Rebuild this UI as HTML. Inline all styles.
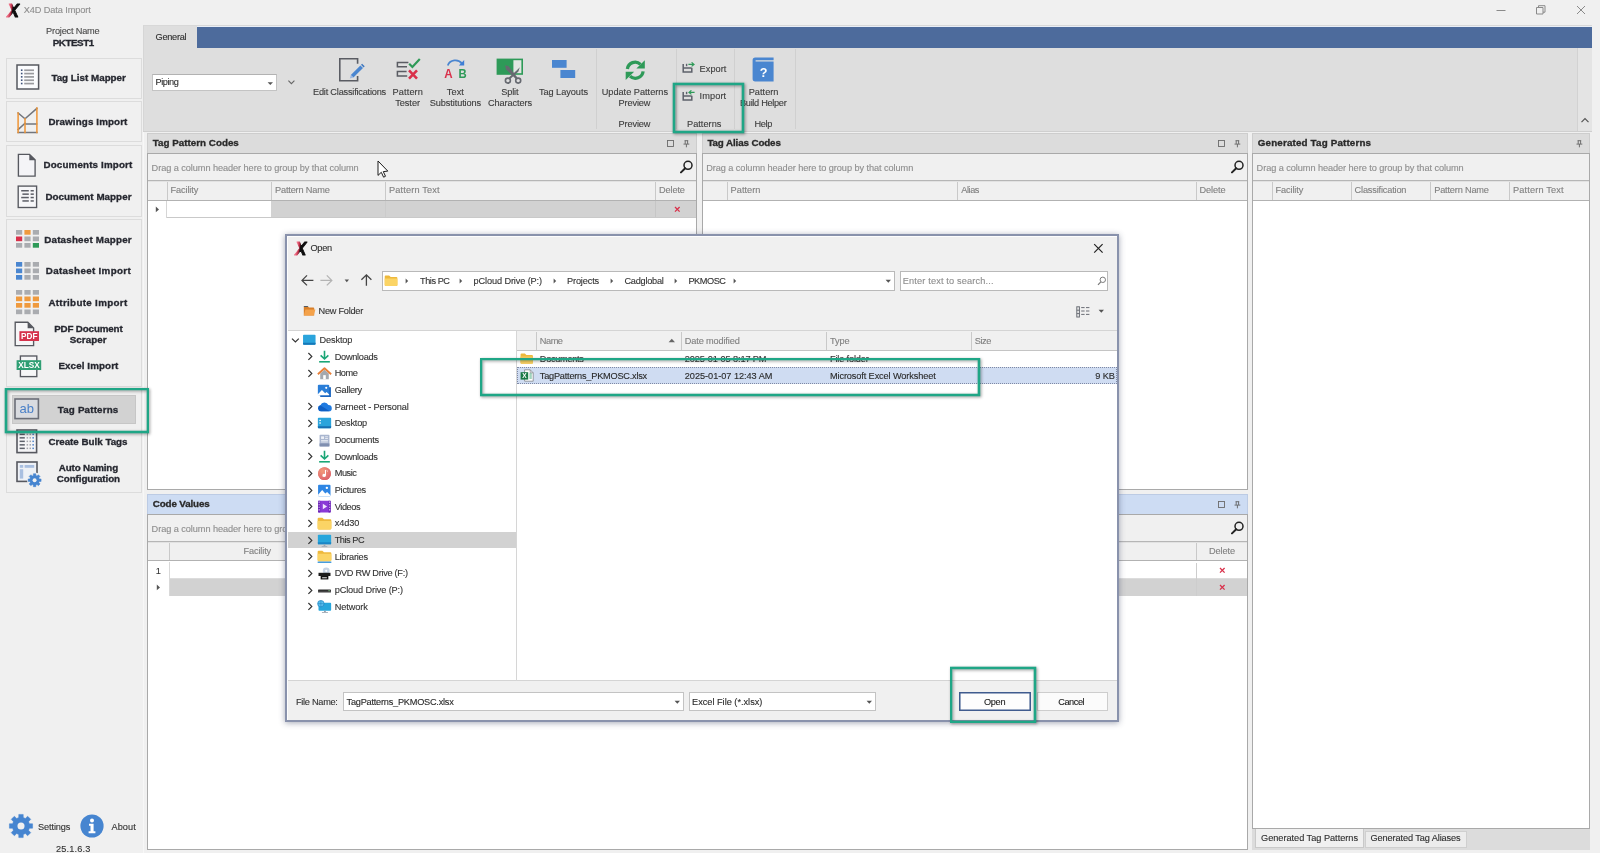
<!DOCTYPE html>
<html lang="en"><head><meta charset="utf-8"><title>X4D Data Import</title>
<style>
html,body{margin:0;padding:0;background:#f0f0f0;}
body{width:1600px;height:853px;overflow:hidden;position:relative;font-family:"Liberation Sans",Arial,sans-serif;font-size:9.2px;color:#3a3a3a;}
#app{position:absolute;left:0;top:0;width:1600px;height:853px;overflow:hidden;will-change:transform;}
#app div,#app svg,#app span.t{position:absolute;box-sizing:border-box;}
span.t{white-space:nowrap;line-height:12px;height:12px;-webkit-text-stroke:.12px;}
.hl{border:2px solid #1fa686;box-shadow:0 0 0 .3px #1fa686,inset 0 0 0 .3px #1fa686;filter:drop-shadow(1px 1.5px 1.5px rgba(0,0,0,.4));}
</style></head>
<body><div id="app">
<svg style="left:6px;top:1.5px" width="16.76" height="17" viewBox="0 0 16.76 17"><defs><linearGradient id="xg6" x1="0" y1="0" x2="1" y2="0" gradientTransform="skewX(-14)"><stop offset="0" stop-color="#e8506a"/><stop offset=".3" stop-color="#ee6f86"/><stop offset=".47" stop-color="#b82a44"/><stop offset=".58" stop-color="#0c0c0c"/><stop offset="1" stop-color="#0c0c0c"/></linearGradient></defs><text x="1.3" y="14.6" font-family="Liberation Sans,Arial,sans-serif" font-weight="700" font-style="italic" font-size="19.04" fill="url(#xg6)" stroke="url(#xg6)" stroke-width="0.9" stroke-linejoin="round" textLength="11.76" lengthAdjust="spacingAndGlyphs">X</text></svg><span class="t" style="left:23.80px;top:4px;color:#8e8e8e;letter-spacing:-0.108px;">X4D Data Import</span><svg style="left:1490px;top:0px" width="110" height="20" viewBox="0 0 110 20" ><g stroke="#8a8a8a" stroke-width="1" fill="none"><path d="M6.5 10.5h9"/><path d="M46.5 7.5h6.5v6.5h-6.5z"/><path d="M48.5 7.5v-1.8h6.5v6.5h-2"/><path d="M87 6l8 8M95 6l-8 8"/></g></svg><span class="t" style="left:46.10px;top:25px;color:#4a4a4a;letter-spacing:-0.188px;">Project Name</span><span class="t" style="left:52.72px;top:37px;font-size:9.8px;font-weight:700;-webkit-text-stroke:.32px;color:#262830;letter-spacing:-0.450px;">PKTEST1</span><div style="left:6px;top:57.5px;width:136px;height:41px;background:#f0f0f0;border:1px solid #dcdcdc;"></div><div style="left:6px;top:101px;width:136px;height:41px;background:#f0f0f0;border:1px solid #dcdcdc;"></div><div style="left:6px;top:144.5px;width:136px;height:72px;background:#f0f0f0;border:1px solid #dcdcdc;"></div><div style="left:6px;top:219px;width:136px;height:167.5px;background:#f0f0f0;border:1px solid #dcdcdc;"></div><div style="left:6px;top:388.5px;width:136px;height:104.5px;background:#f0f0f0;border:1px solid #dcdcdc;"></div><div style="left:12px;top:395px;width:124px;height:29px;background:#d2d2d2;border:1px solid #c6c6c6;"></div><div style="left:142.5px;top:132px;width:1.8px;height:721px;background:#f7f7f7;"></div><svg style="left:16px;top:64.4px" width="24" height="26" viewBox="0 0 24 26" ><rect x="1" y="1" width="21.6" height="24" fill="#fbfcfe" stroke="#56585f" stroke-width="1.5"/><rect x="4.9" y="5.40" width="1.6" height="1.6" fill="#3d5078"/><rect x="8.2" y="5.40" width="9.8" height="1.7" fill="#9a9b9f"/><rect x="4.9" y="8.73" width="1.6" height="1.6" fill="#3d5078"/><rect x="8.2" y="8.73" width="9.8" height="1.7" fill="#9a9b9f"/><rect x="4.9" y="12.06" width="1.6" height="1.6" fill="#3d5078"/><rect x="8.2" y="12.06" width="9.8" height="1.7" fill="#9a9b9f"/><rect x="4.9" y="15.39" width="1.6" height="1.6" fill="#3d5078"/><rect x="8.2" y="15.39" width="9.8" height="1.7" fill="#9a9b9f"/><rect x="4.9" y="18.72" width="1.6" height="1.6" fill="#3d5078"/><rect x="8.2" y="18.72" width="9.8" height="1.7" fill="#9a9b9f"/></svg><span class="t" style="left:51.40px;top:72px;font-size:9.8px;font-weight:700;-webkit-text-stroke:.32px;color:#262830;letter-spacing:0.007px;">Tag List Mapper</span><svg style="left:16px;top:106px" width="24" height="28" viewBox="0 0 24 28" ><g fill="none" stroke-width="1.5" stroke-linecap="square"><path d="M2.1 7l6.9 5.8L20.9 2.4M9 17.2l-6.9 6.4M9.6 18h11M2.1 26.4h18.8" stroke="#72757c"/><path d="M2.1 7v19.4M9 12.8v13.6M20.9 2v24.4" stroke="#ef9536"/></g></svg><span class="t" style="left:48.40px;top:116px;font-size:9.8px;font-weight:700;-webkit-text-stroke:.32px;color:#262830;letter-spacing:0.120px;">Drawings Import</span><svg style="left:17px;top:152.5px" width="20" height="25" viewBox="0 0 20 25" ><path d="M1.4 1.3h11.1l5.6 5.6v16.2H1.4z" fill="#f4f4f7" stroke="#56585f" stroke-width="1.35"/><path d="M12.3 1.2v6h6z" fill="#56585f"/></svg><span class="t" style="left:43.40px;top:159px;font-size:9.8px;font-weight:700;-webkit-text-stroke:.32px;color:#262830;letter-spacing:0.160px;">Documents Import</span><svg style="left:17px;top:184.5px" width="22" height="24" viewBox="0 0 22 24" ><rect x="1.2" y="1.1" width="18.4" height="21.4" fill="#f6f6f8" stroke="#56585f" stroke-width="1.35"/><rect x="4.2" y="5" width="7.6" height="1.5" fill="#5c5e66"/><rect x="13.6" y="5" width="3.2" height="1.5" fill="#5c5e66"/><rect x="5.4" y="8.4" width="6.4" height="1.5" fill="#5c5e66"/><rect x="13.6" y="8.4" width="3.2" height="1.5" fill="#5c5e66"/><rect x="4.2" y="11.8" width="7.6" height="1.5" fill="#5c5e66"/><rect x="13.6" y="11.8" width="3.2" height="1.5" fill="#5c5e66"/><rect x="5.4" y="15.2" width="6.4" height="1.5" fill="#5c5e66"/><rect x="13.6" y="15.2" width="3.2" height="1.5" fill="#5c5e66"/></svg><span class="t" style="left:45.40px;top:191px;font-size:9.8px;font-weight:700;-webkit-text-stroke:.32px;color:#262830;letter-spacing:0.042px;">Document Mapper</span><svg style="left:16px;top:230px" width="24" height="19.5" viewBox="0 0 24 19.5" ><rect x="0" y="0" width="6.2" height="4.7" fill="#aaacb0"/><rect x="8.4" y="0" width="6.2" height="4.7" fill="#ef9a3e"/><rect x="16.8" y="0" width="6.2" height="4.7" fill="#aaacb0"/><rect x="0" y="6.5" width="6.2" height="4.7" fill="#d9304a"/><rect x="8.4" y="6.5" width="6.2" height="4.7" fill="#aaacb0"/><rect x="16.8" y="6.5" width="6.2" height="4.7" fill="#aaacb0"/><rect x="0" y="13" width="6.2" height="4.7" fill="#aaacb0"/><rect x="8.4" y="13" width="6.2" height="4.7" fill="#aaacb0"/><rect x="16.8" y="13" width="6.2" height="4.7" fill="#2e9a58"/></svg><span class="t" style="left:44.20px;top:234px;font-size:9.8px;font-weight:700;-webkit-text-stroke:.32px;color:#262830;letter-spacing:0.207px;">Datasheet Mapper</span><svg style="left:16px;top:261.6px" width="24" height="19.5" viewBox="0 0 24 19.5" ><rect x="0" y="0" width="6.2" height="4.7" fill="#4a86d0"/><rect x="8.4" y="0" width="6.2" height="4.7" fill="#aaacb0"/><rect x="16.8" y="0" width="6.2" height="4.7" fill="#aaacb0"/><rect x="0" y="6.5" width="6.2" height="4.7" fill="#4a86d0"/><rect x="8.4" y="6.5" width="6.2" height="4.7" fill="#aaacb0"/><rect x="16.8" y="6.5" width="6.2" height="4.7" fill="#aaacb0"/><rect x="0" y="13" width="6.2" height="4.7" fill="#4a86d0"/><rect x="8.4" y="13" width="6.2" height="4.7" fill="#aaacb0"/><rect x="16.8" y="13" width="6.2" height="4.7" fill="#aaacb0"/></svg><span class="t" style="left:45.80px;top:265px;font-size:9.8px;font-weight:700;-webkit-text-stroke:.32px;color:#262830;letter-spacing:0.323px;">Datasheet Import</span><svg style="left:16px;top:290px" width="24" height="26" viewBox="0 0 24 26" ><rect x="0" y="0" width="6.2" height="4.7" fill="#aaacb0"/><rect x="8.4" y="0" width="6.2" height="4.7" fill="#aaacb0"/><rect x="16.8" y="0" width="6.2" height="4.7" fill="#aaacb0"/><rect x="0" y="6.5" width="6.2" height="4.7" fill="#ef9a3e"/><rect x="8.4" y="6.5" width="6.2" height="4.7" fill="#ef9a3e"/><rect x="16.8" y="6.5" width="6.2" height="4.7" fill="#ef9a3e"/><rect x="0" y="13" width="6.2" height="4.7" fill="#ef9a3e"/><rect x="8.4" y="13" width="6.2" height="4.7" fill="#ef9a3e"/><rect x="16.8" y="13" width="6.2" height="4.7" fill="#ef9a3e"/><rect x="0" y="19.5" width="6.2" height="4.7" fill="#aaacb0"/><rect x="8.4" y="19.5" width="6.2" height="4.7" fill="#aaacb0"/><rect x="16.8" y="19.5" width="6.2" height="4.7" fill="#aaacb0"/></svg><span class="t" style="left:48.40px;top:297px;font-size:9.8px;font-weight:700;-webkit-text-stroke:.32px;color:#262830;letter-spacing:0.318px;">Attribute Import</span><svg style="left:13.5px;top:321px" width="27" height="26" viewBox="0 0 27 26" ><path d="M1.2 1.2h12.6l5.8 5.8v17.6H1.2z" fill="#f6f6f7" stroke="#56585f" stroke-width="1.35"/><path d="M13.6 1.2v6h6z" fill="#56585f"/><rect x="5.4" y="10.2" width="19.6" height="9.8" fill="#d6334c"/><text x="15.2" y="18.2" text-anchor="middle" font-family="Liberation Sans,Arial,sans-serif" font-weight="700" font-size="8.6" fill="#fff" textLength="16.4" lengthAdjust="spacingAndGlyphs">PDF</text></svg><span class="t" style="left:54.20px;top:323px;font-size:9.8px;font-weight:700;-webkit-text-stroke:.32px;color:#262830;letter-spacing:-0.160px;">PDF Document</span><span class="t" style="left:69.70px;top:334px;font-size:9.8px;font-weight:700;-webkit-text-stroke:.32px;color:#262830;letter-spacing:0.057px;">Scraper</span><svg style="left:15.5px;top:354.5px" width="27" height="23" viewBox="0 0 27 23" ><rect x="4.4" y="1" width="16.4" height="20.6" fill="#f6f6f7" stroke="#56585f" stroke-width="1.35"/><rect x="0.6" y="5.2" width="24.6" height="9.8" fill="#2f9f74"/><text x="12.9" y="13.2" text-anchor="middle" font-family="Liberation Sans,Arial,sans-serif" font-weight="700" font-size="8.4" fill="#fff" textLength="21.5" lengthAdjust="spacingAndGlyphs">XLSX</text></svg><span class="t" style="left:58.40px;top:360px;font-size:9.8px;font-weight:700;-webkit-text-stroke:.32px;color:#262830;letter-spacing:0.107px;">Excel Import</span><svg style="left:13.5px;top:398px" width="26" height="22" viewBox="0 0 26 22" ><rect x="1" y="1" width="23.4" height="19.6" fill="#d9dbe0" stroke="#6b6e78" stroke-width="1.6"/><text x="12.8" y="15.4" text-anchor="middle" font-family="Liberation Sans,Arial,sans-serif" font-size="13" fill="#4a80c8">ab</text></svg><span class="t" style="left:57.80px;top:404px;font-size:9.8px;font-weight:700;-webkit-text-stroke:.32px;color:#262830;letter-spacing:0.173px;">Tag Patterns</span><svg style="left:16px;top:428.5px" width="22" height="25" viewBox="0 0 22 25" ><rect x="1" y="1" width="19.6" height="22.6" fill="#f4f4f6" stroke="#56585f" stroke-width="1.6"/><rect x="3.6" y="4.6" width="5.2" height="1.5" fill="#5d616b"/><rect x="10.6" y="4.6" width="1.5" height="1.5" fill="#a2a4aa"/><rect x="13.5" y="4.6" width="1.5" height="1.5" fill="#a2a4aa"/><rect x="16.4" y="4.6" width="1.5" height="1.5" fill="#4a80c8"/><rect x="3.6" y="8.1" width="5.2" height="1.5" fill="#5d616b"/><rect x="10.6" y="8.1" width="1.5" height="1.5" fill="#a2a4aa"/><rect x="13.5" y="8.1" width="1.5" height="1.5" fill="#a2a4aa"/><rect x="16.4" y="8.1" width="1.5" height="1.5" fill="#4a80c8"/><rect x="3.6" y="11.6" width="5.2" height="1.5" fill="#5d616b"/><rect x="10.6" y="11.6" width="1.5" height="1.5" fill="#a2a4aa"/><rect x="13.5" y="11.6" width="1.5" height="1.5" fill="#a2a4aa"/><rect x="16.4" y="11.6" width="1.5" height="1.5" fill="#4a80c8"/><rect x="3.6" y="15.1" width="5.2" height="1.5" fill="#5d616b"/><rect x="10.6" y="15.1" width="1.5" height="1.5" fill="#a2a4aa"/><rect x="13.5" y="15.1" width="1.5" height="1.5" fill="#a2a4aa"/><rect x="16.4" y="15.1" width="1.5" height="1.5" fill="#4a80c8"/><rect x="3.6" y="18.6" width="5.2" height="1.5" fill="#5d616b"/><rect x="10.6" y="18.6" width="1.5" height="1.5" fill="#a2a4aa"/><rect x="13.5" y="18.6" width="1.5" height="1.5" fill="#a2a4aa"/><rect x="16.4" y="18.6" width="1.5" height="1.5" fill="#4a80c8"/></svg><span class="t" style="left:48.40px;top:436px;font-size:9.8px;font-weight:700;-webkit-text-stroke:.32px;color:#262830;letter-spacing:-0.013px;">Create Bulk Tags</span><svg style="left:15.5px;top:461px" width="27" height="27" viewBox="0 0 27 27" ><rect x="1" y="1" width="20" height="19.4" fill="#eef1f6" stroke="#56585f" stroke-width="1.6"/><rect x="3.8" y="4" width="3.4" height="2.8" fill="#a9bfe0"/><rect x="8.6" y="4" width="9.6" height="2.8" fill="#a9bfe0"/><rect x="3.8" y="8.2" width="3.4" height="9.4" fill="#a9bfe0"/><circle cx="18.6" cy="19.2" r="7.6" fill="#f0f0f0"/><polygon points="17.36,12.72 19.84,12.72 19.89,14.49 21.02,14.96 22.31,13.74 24.06,15.49 22.84,16.78 23.31,17.91 25.08,17.96 25.08,20.44 23.31,20.49 22.84,21.62 24.06,22.91 22.31,24.66 21.02,23.44 19.89,23.91 19.84,25.68 17.36,25.68 17.31,23.91 16.18,23.44 14.89,24.66 13.14,22.91 14.36,21.62 13.89,20.49 12.12,20.44 12.12,17.96 13.89,17.91 14.36,16.78 13.14,15.49 14.89,13.74 16.18,14.96 17.31,14.49" fill="#4685d0" stroke="#4685d0" stroke-width=".5" stroke-linejoin="round"/><circle cx="18.6" cy="19.2" r="1.98" fill="#f0f0f0"/></svg><span class="t" style="left:58.80px;top:462px;font-size:9.8px;font-weight:700;-webkit-text-stroke:.32px;color:#262830;letter-spacing:-0.159px;">Auto Naming</span><span class="t" style="left:56.80px;top:473px;font-size:9.8px;font-weight:700;-webkit-text-stroke:.32px;color:#262830;letter-spacing:-0.078px;">Configuration</span><svg style="left:8.3px;top:813.4px" width="26" height="26" viewBox="0 0 26 26" ><polygon points="10.79,1.41 15.21,1.41 15.30,4.58 17.33,5.42 19.63,3.24 22.76,6.37 20.58,8.67 21.42,10.70 24.59,10.79 24.59,15.21 21.42,15.30 20.58,17.33 22.76,19.63 19.63,22.76 17.33,20.58 15.30,21.42 15.21,24.59 10.79,24.59 10.70,21.42 8.67,20.58 6.37,22.76 3.24,19.63 5.42,17.33 4.58,15.30 1.41,15.21 1.41,10.79 4.58,10.70 5.42,8.67 3.24,6.37 6.37,3.24 8.67,5.42 10.70,4.58" fill="#4685d0" stroke="#4685d0" stroke-width=".5" stroke-linejoin="round"/><circle cx="13" cy="13" r="3.54" fill="#f0f0f0"/></svg><span class="t" style="left:38.00px;top:821px;color:#333;letter-spacing:-0.113px;">Settings</span><svg style="left:79.8px;top:814.2px" width="24" height="24" viewBox="0 0 24 24" ><circle cx="12" cy="12" r="11.6" fill="#4685d0"/><circle cx="12" cy="6.4" r="2" fill="#fff"/><path d="M9 9.8h4.6v7.4h1.8v2H8.6v-2h1.9v-5.4H9z" fill="#fff"/></svg><span class="t" style="left:111.50px;top:821px;color:#333;letter-spacing:0.057px;">About</span><span class="t" style="left:56.00px;top:843px;color:#333;letter-spacing:0.160px;">25.1.6.3</span><div style="left:143px;top:24.6px;width:1449px;height:107px;background:#dedede;border-left:1px solid #d6d6d6;border-top:1px solid #d8d8d8;"></div><div style="left:197px;top:27px;width:1395px;height:20.7px;background:#4d6b9c;"></div><div style="left:197px;top:26px;width:1395px;height:1px;background:#e9eef6;"></div><div style="left:143px;top:131px;width:1449px;height:1px;background:#cfcfcf;"></div><span class="t" style="left:155.60px;top:31px;color:#2e2e2e;letter-spacing:-0.298px;">General</span><div style="left:1577px;top:48px;width:15px;height:83px;background:#e4e4e4;border-left:1px solid #d2d2d2;"></div><svg style="left:1580px;top:116px" width="10" height="8" viewBox="0 0 10 8" ><path d="M1.5 6.2L5 2.6l3.5 3.6" fill="none" stroke="#555" stroke-width="1.2"/></svg><div style="left:152px;top:74.4px;width:124.6px;height:16.2px;background:#fff;border:1px solid #c3c3c3;border-top-color:#b2b2b2;"></div><span class="t" style="left:155.60px;top:76px;color:#2e2e2e;letter-spacing:-0.450px;">Piping</span><svg style="left:266.5px;top:80.5px" width="7" height="5" viewBox="0 0 7 5" ><path d="M0.6 1.2h5.4L3.3 4z" fill="#555"/></svg><svg style="left:287px;top:78.5px" width="9" height="7" viewBox="0 0 9 7" ><path d="M1.4 1.6L4.4 4.6l3-3" fill="none" stroke="#666" stroke-width="1.1"/></svg><div style="left:595.5px;top:49px;width:1px;height:80px;background:#d0d0d0;"></div><div style="left:676px;top:49px;width:1px;height:80px;background:#d0d0d0;"></div><div style="left:733.7px;top:49px;width:1px;height:80px;background:#d0d0d0;"></div><div style="left:795px;top:49px;width:1px;height:80px;background:#d0d0d0;"></div><svg style="left:337.6px;top:57px" width="28" height="26" viewBox="0 0 28 26" ><path d="M19.6 19v4.7H1.8V1.8h17.8v5" fill="none" stroke="#5a5c63" stroke-width="1.6"/><path d="M13.4 19.6l9.6-9.6 2.6 2.6-9.6 9.6z" fill="#4a86d0" transform="translate(-.6 -1.6)"/><path d="M23.6 9.4l1.1-1.1 2.6 2.6-1.1 1.1z" fill="#3f78c0" transform="translate(-.6 -1.6)"/><path d="M13.4 19.6l-1 3.6 3.6-1z" fill="#9db9e2" transform="translate(-.6 -1.6)"/></svg><span class="t" style="left:313.00px;top:86px;color:#3c3c3c;letter-spacing:-0.205px;">Edit Classifications</span><svg style="left:396px;top:57px" width="27" height="24" viewBox="0 0 27 24" ><g fill="none" stroke="#5a5c63" stroke-width="1.5"><path d="M12.4 5.4H1.4v4.4h9.6"/><path d="M10.6 14.6H1.4V19h9.8"/></g><path d="M13.2 6.8l3.2 3.2 7.4-8" fill="none" stroke="#2e9a58" stroke-width="2.2"/><path d="M13 13.4l8 8.2M21 13.4l-8 8.2" fill="none" stroke="#d9304a" stroke-width="2.6"/></svg><span class="t" style="left:392.60px;top:86px;color:#3c3c3c;letter-spacing:0.111px;">Pattern</span><span class="t" style="left:395.20px;top:97px;color:#3c3c3c;letter-spacing:-0.039px;">Tester</span><svg style="left:443px;top:58px" width="26" height="22" viewBox="0 0 26 22" ><path d="M4.8 7.6C6.6 1.6 15.4 0.6 19 5.6" fill="none" stroke="#4a86d0" stroke-width="1.8"/><path d="M15.8 7.4h5.4V2z" fill="#3f7fd6"/><text x="1.2" y="19.9" font-family="Liberation Sans,Arial,sans-serif" font-weight="700" font-size="13.4" fill="#d9304a" textLength="8.4" lengthAdjust="spacingAndGlyphs">A</text><text x="15.6" y="19.9" font-family="Liberation Sans,Arial,sans-serif" font-weight="700" font-size="13.4" fill="#2e9a58" textLength="8.2" lengthAdjust="spacingAndGlyphs">B</text></svg><span class="t" style="left:446.80px;top:86px;color:#3c3c3c;letter-spacing:0.085px;">Text</span><span class="t" style="left:429.80px;top:97px;color:#3c3c3c;letter-spacing:-0.108px;">Substitutions</span><svg style="left:496px;top:57.5px" width="28" height="27" viewBox="0 0 28 27" ><rect x="0.6" y="0.6" width="26.4" height="16.2" fill="#2e9a58"/><rect x="17.4" y="2.2" width="8" height="13" fill="#e2e6e2"/><path d="M9 7.2L12.6 8.2 21.6 19.8 19.8 21 10 11.2z" fill="#666970"/><path d="M23.8 9.2L22.4 13.6 14.2 21 12.6 19.8 20.6 12.4z" fill="#666970"/><circle cx="11.9" cy="22.6" r="2.5" fill="#dedede" stroke="#666970" stroke-width="1.6"/><circle cx="22.2" cy="22.6" r="2.5" fill="#dedede" stroke="#666970" stroke-width="1.6"/></svg><span class="t" style="left:501.35px;top:86px;color:#3c3c3c;letter-spacing:-0.195px;">Split</span><span class="t" style="left:488.00px;top:97px;color:#3c3c3c;letter-spacing:-0.094px;">Characters</span><svg style="left:551px;top:59px" width="26" height="20" viewBox="0 0 26 20" ><rect x="1" y="1" width="14.6" height="7.8" fill="#4a86d0"/><rect x="9.4" y="11" width="14.8" height="8" fill="#4a86d0"/></svg><span class="t" style="left:538.90px;top:86px;color:#3c3c3c;letter-spacing:-0.041px;">Tag Layouts</span><svg style="left:624px;top:60px" width="22.5" height="20.6" viewBox="0 0 24 22" ><g fill="none" stroke="#2e9a58" stroke-width="3.5"><path d="M3.6 9.6A8.3 8.3 0 0 1 17.6 4.6"/><path d="M20.4 12.2A8.3 8.3 0 0 1 6.4 17.2"/></g><path d="M13.2 9.2h9V0.4z" fill="#2e9a58"/><path d="M10.8 12.6h-9v8.8z" fill="#2e9a58"/></svg><span class="t" style="left:601.70px;top:86px;color:#3c3c3c;letter-spacing:-0.007px;">Update Patterns</span><span class="t" style="left:618.50px;top:97px;color:#3c3c3c;letter-spacing:-0.127px;">Preview</span><span class="t" style="left:618.50px;top:118px;color:#3c3c3c;letter-spacing:-0.127px;">Preview</span><svg style="left:681.5px;top:62.4px" width="14" height="11" viewBox="0 0 14 11" ><path d="M1.2 2v8h8.6V5.8M1.2 6h8.4" fill="none" stroke="#5d616b" stroke-width="1.5"/><path d="M4.6 1.8v2.4" stroke="#5d616b" stroke-width="1.4"/><path d="M6.4 2.4h5.6M9.6 0.4l2.4 2L9.6 4.4" fill="none" stroke="#2e9a58" stroke-width="1.2"/></svg><span class="t" style="left:699.60px;top:63px;color:#3c3c3c;letter-spacing:0.056px;">Export</span><svg style="left:681.5px;top:89.8px" width="14" height="11" viewBox="0 0 14 11" ><path d="M1.2 2v8h8.6V5.8M1.2 6h8.4" fill="none" stroke="#5d616b" stroke-width="1.5"/><path d="M4.6 1.8v2.4" stroke="#5d616b" stroke-width="1.4"/><path d="M12.6 2.4H7M9.4 0.4L7 2.4l2.4 2" fill="none" stroke="#2e9a58" stroke-width="1.2"/></svg><span class="t" style="left:699.60px;top:90px;color:#3c3c3c;letter-spacing:0.092px;">Import</span><span class="t" style="left:687.00px;top:118px;color:#3c3c3c;letter-spacing:0.023px;">Patterns</span><svg style="left:752.4px;top:57.2px" width="22" height="25" viewBox="0 0 22 25" ><path d="M.6 3.2Q.6.6 3.2.6H21.6v2.6H3.6v1.3H21.6V24.4H3.2Q.6 24.4 .6 21.8z" fill="#4a86d0"/><text x="11.6" y="19.6" text-anchor="middle" font-family="Liberation Sans,Arial,sans-serif" font-weight="700" font-size="12.6" fill="#fff">?</text></svg><span class="t" style="left:748.70px;top:86px;color:#3c3c3c;letter-spacing:0.025px;">Pattern</span><span class="t" style="left:740.00px;top:97px;color:#3c3c3c;letter-spacing:-0.304px;">Build Helper</span><span class="t" style="left:754.40px;top:118px;color:#3c3c3c;letter-spacing:-0.327px;">Help</span><div style="left:147px;top:133px;width:550px;height:356.6px;background:#fff;"></div><div style="left:147px;top:133px;width:550px;height:20px;background:#dcdcdc;border:1px solid #cdcdcd;border-bottom:0;"></div><div style="left:147px;top:153px;width:550px;height:336.6px;border:1px solid #a9a9a9;"></div><span class="t" style="left:152.80px;top:137px;font-size:9.8px;font-weight:700;-webkit-text-stroke:.32px;color:#2a2a2a;letter-spacing:0.010px;">Tag Pattern Codes</span><svg style="left:683.4px;top:140px" width="7" height="8" viewBox="0 0 7 8" ><g fill="none" stroke="#5c5c5c" stroke-width=".85"><path d="M1.6.7h3.6M2.2.7v3.2M4.6.7v3.2M.5 4.1h5.8M3.4 4.1v3.2"/></g></svg><svg style="left:666.8px;top:140px" width="8" height="8" viewBox="0 0 8 8" ><rect x="0.5" y="0.5" width="6" height="6" fill="none" stroke="#6a6a6a" stroke-width=".9"/></svg><div style="left:148px;top:154px;width:548px;height:27px;background:#f0f0f0;border-bottom:1px solid #b6b6b6;"></div><span class="t" style="left:151.60px;top:162px;color:#8e8e8e;letter-spacing:-0.070px;">Drag a column header here to group by that column</span><svg style="left:679.5px;top:160px" width="14" height="14" viewBox="0 0 14 14" ><circle cx="8" cy="5.3" r="4" fill="none" stroke="#222" stroke-width="1.5"/><path d="M5.2 8.3L1 12.4" stroke="#222" stroke-width="2" stroke-linecap="round"/></svg><div style="left:148px;top:181px;width:548px;height:19.5px;background:#f0f0f0;border-bottom:1px solid #b2b2b2;border-top:1px solid #e2e2e2;"></div><div style="left:166.6px;top:182px;width:1px;height:17.5px;background:#c9c9c9;"></div><div style="left:271px;top:182px;width:1px;height:17.5px;background:#c9c9c9;"></div><span class="t" style="left:170.60px;top:184px;color:#808080;letter-spacing:-0.124px;">Facility</span><div style="left:385px;top:182px;width:1px;height:17.5px;background:#c9c9c9;"></div><span class="t" style="left:275.00px;top:184px;color:#808080;letter-spacing:-0.174px;">Pattern Name</span><div style="left:655px;top:182px;width:1px;height:17.5px;background:#c9c9c9;"></div><span class="t" style="left:389.00px;top:184px;color:#808080;letter-spacing:0.162px;">Pattern Text</span><span class="t" style="left:659.00px;top:184px;color:#808080;letter-spacing:-0.127px;">Delete</span><div style="left:167px;top:200.5px;width:529px;height:16.8px;background:#d2d2d2;"></div><div style="left:167px;top:200.5px;width:104.4px;height:16.8px;background:#fff;"></div><div style="left:167px;top:217px;width:529px;height:1px;background:#c9c9c9;"></div><div style="left:166px;top:201px;width:1px;height:17px;background:#d6d6d6;"></div><div style="left:384.6px;top:201px;width:1px;height:16px;background:#cbcbcb;"></div><div style="left:654.6px;top:201px;width:1px;height:16px;background:#c6c6c6;"></div><svg style="left:155px;top:206px" width="5" height="7" viewBox="0 0 5 7" ><path d="M0.8 0.6L4 3.4 0.8 6.2z" fill="#555"/></svg><svg style="left:673.6px;top:206px" width="7" height="7" viewBox="0 0 7 7" ><path d="M1 1l4.6 4.6M5.6 1L1 5.6" stroke="#d9304a" stroke-width="1.3"/></svg><div style="left:701.6px;top:133px;width:546.4px;height:356.6px;background:#fff;"></div><div style="left:701.6px;top:133px;width:546.4px;height:20px;background:#dcdcdc;border:1px solid #cdcdcd;border-bottom:0;"></div><div style="left:701.6px;top:153px;width:546.4px;height:336.6px;border:1px solid #a9a9a9;"></div><span class="t" style="left:707.40px;top:137px;font-size:9.8px;font-weight:700;-webkit-text-stroke:.32px;color:#2a2a2a;letter-spacing:-0.116px;">Tag Alias Codes</span><svg style="left:1234.4px;top:140px" width="7" height="8" viewBox="0 0 7 8" ><g fill="none" stroke="#5c5c5c" stroke-width=".85"><path d="M1.6.7h3.6M2.2.7v3.2M4.6.7v3.2M.5 4.1h5.8M3.4 4.1v3.2"/></g></svg><svg style="left:1217.8px;top:140px" width="8" height="8" viewBox="0 0 8 8" ><rect x="0.5" y="0.5" width="6" height="6" fill="none" stroke="#6a6a6a" stroke-width=".9"/></svg><div style="left:702.6px;top:154px;width:544.4px;height:27px;background:#f0f0f0;border-bottom:1px solid #b6b6b6;"></div><span class="t" style="left:706.20px;top:162px;color:#8e8e8e;letter-spacing:-0.070px;">Drag a column header here to group by that column</span><svg style="left:1230.5px;top:160px" width="14" height="14" viewBox="0 0 14 14" ><circle cx="8" cy="5.3" r="4" fill="none" stroke="#222" stroke-width="1.5"/><path d="M5.2 8.3L1 12.4" stroke="#222" stroke-width="2" stroke-linecap="round"/></svg><div style="left:702.6px;top:181px;width:544.4px;height:19.5px;background:#f0f0f0;border-bottom:1px solid #b2b2b2;border-top:1px solid #e2e2e2;"></div><div style="left:726.6px;top:182px;width:1px;height:17.5px;background:#c9c9c9;"></div><div style="left:957.2px;top:182px;width:1px;height:17.5px;background:#c9c9c9;"></div><span class="t" style="left:730.60px;top:184px;color:#808080;letter-spacing:0.025px;">Pattern</span><div style="left:1195.6px;top:182px;width:1px;height:17.5px;background:#c9c9c9;"></div><span class="t" style="left:961.20px;top:184px;color:#808080;letter-spacing:-0.424px;">Alias</span><span class="t" style="left:1199.60px;top:184px;color:#808080;letter-spacing:-0.127px;">Delete</span><div style="left:1252px;top:133px;width:338px;height:717.4px;background:#fff;"></div><div style="left:1252px;top:133px;width:338px;height:20px;background:#dcdcdc;border:1px solid #cdcdcd;border-bottom:0;"></div><div style="left:1252px;top:153px;width:338px;height:675.6px;border:1px solid #a9a9a9;"></div><span class="t" style="left:1257.80px;top:137px;font-size:9.8px;font-weight:700;-webkit-text-stroke:.32px;color:#2a2a2a;letter-spacing:0.164px;">Generated Tag Patterns</span><svg style="left:1576.4px;top:140px" width="7" height="8" viewBox="0 0 7 8" ><g fill="none" stroke="#5c5c5c" stroke-width=".85"><path d="M1.6.7h3.6M2.2.7v3.2M4.6.7v3.2M.5 4.1h5.8M3.4 4.1v3.2"/></g></svg><div style="left:1253px;top:154px;width:336px;height:27px;background:#f0f0f0;border-bottom:1px solid #b6b6b6;"></div><span class="t" style="left:1256.60px;top:162px;color:#8e8e8e;letter-spacing:-0.070px;">Drag a column header here to group by that column</span><div style="left:1253px;top:181px;width:336px;height:19.5px;background:#f0f0f0;border-bottom:1px solid #b2b2b2;border-top:1px solid #e2e2e2;"></div><div style="left:1271.6px;top:182px;width:1px;height:17.5px;background:#c9c9c9;"></div><div style="left:1350.6px;top:182px;width:1px;height:17.5px;background:#c9c9c9;"></div><span class="t" style="left:1275.60px;top:184px;color:#808080;letter-spacing:-0.124px;">Facility</span><div style="left:1430.2px;top:182px;width:1px;height:17.5px;background:#c9c9c9;"></div><span class="t" style="left:1354.60px;top:184px;color:#808080;letter-spacing:-0.173px;">Classification</span><div style="left:1509px;top:182px;width:1px;height:17.5px;background:#c9c9c9;"></div><span class="t" style="left:1434.20px;top:184px;color:#808080;letter-spacing:-0.174px;">Pattern Name</span><span class="t" style="left:1513.00px;top:184px;color:#808080;letter-spacing:0.162px;">Pattern Text</span><div style="left:1252px;top:828.6px;width:338px;height:21.8px;background:#dcdcdc;"></div><div style="left:1255px;top:829px;width:109px;height:19px;background:#f0f0f0;border:1px solid #c9c9c9;border-top:0;"></div><div style="left:1364.5px;top:830.5px;width:102px;height:17px;background:#ececec;border:1px solid #cfcfcf;"></div><span class="t" style="left:1261.00px;top:832px;color:#2e2e2e;letter-spacing:-0.018px;">Generated Tag Patterns</span><span class="t" style="left:1370.40px;top:832px;color:#2e2e2e;letter-spacing:-0.099px;">Generated Tag Aliases</span><div style="left:147px;top:494.4px;width:1101px;height:355.6px;background:#fff;"></div><div style="left:147px;top:494.4px;width:1101px;height:19.8px;background:#cddcf3;border:1px solid #bccbe4;border-bottom:0;"></div><div style="left:147px;top:514.2px;width:1101px;height:335.8px;border:1px solid #a9a9a9;"></div><span class="t" style="left:152.80px;top:498px;font-size:9.8px;font-weight:700;-webkit-text-stroke:.32px;color:#2a2a2a;letter-spacing:-0.133px;">Code Values</span><svg style="left:1234.4px;top:501.4px" width="7" height="8" viewBox="0 0 7 8" ><g fill="none" stroke="#5c5c5c" stroke-width=".85"><path d="M1.6.7h3.6M2.2.7v3.2M4.6.7v3.2M.5 4.1h5.8M3.4 4.1v3.2"/></g></svg><svg style="left:1217.8px;top:501.4px" width="8" height="8" viewBox="0 0 8 8" ><rect x="0.5" y="0.5" width="6" height="6" fill="none" stroke="#6a6a6a" stroke-width=".9"/></svg><div style="left:148px;top:514.8px;width:1099px;height:27px;background:#f0f0f0;border-bottom:1px solid #b6b6b6;"></div><span class="t" style="left:151.60px;top:523px;color:#8e8e8e;letter-spacing:-0.070px;">Drag a column header here to group by that column</span><svg style="left:1230.5px;top:520.8px" width="14" height="14" viewBox="0 0 14 14" ><circle cx="8" cy="5.3" r="4" fill="none" stroke="#222" stroke-width="1.5"/><path d="M5.2 8.3L1 12.4" stroke="#222" stroke-width="2" stroke-linecap="round"/></svg><div style="left:148px;top:541.8px;width:1099px;height:19.5px;background:#f0f0f0;border-bottom:1px solid #b2b2b2;border-top:1px solid #e2e2e2;"></div><div style="left:169.1px;top:542.8px;width:1px;height:17.5px;background:#c9c9c9;"></div><div style="left:344.6px;top:542.8px;width:1px;height:17.5px;background:#c9c9c9;"></div><span class="t" style="left:243.45px;top:545px;color:#808080;letter-spacing:-0.124px;">Facility</span><div style="left:1195.6px;top:542.8px;width:1px;height:17.5px;background:#c9c9c9;"></div><span class="t" style="left:1209.10px;top:545px;color:#808080;letter-spacing:-0.127px;">Delete</span><div style="left:169.5px;top:562px;width:1077.5px;height:16.6px;background:#fff;border-bottom:1px solid #dcdcdc;"></div><div style="left:169.5px;top:578.5px;width:1077.5px;height:17.3px;background:#d2d2d2;"></div><div style="left:168.6px;top:562px;width:1px;height:34px;background:#d9d9d9;"></div><div style="left:1196px;top:562.5px;width:1px;height:33.5px;background:#cdcdcd;"></div><span class="t" style="left:155.80px;top:565px;color:#333;letter-spacing:-0.100px;">1</span><svg style="left:156px;top:584px" width="5" height="7" viewBox="0 0 5 7" ><path d="M0.8 0.6L4 3.4 0.8 6.2z" fill="#555"/></svg><svg style="left:1219.2px;top:566.8px" width="7" height="7" viewBox="0 0 7 7" ><path d="M1 1l4.6 4.6M5.6 1L1 5.6" stroke="#d9304a" stroke-width="1.3"/></svg><svg style="left:1219.2px;top:584.2px" width="7" height="7" viewBox="0 0 7 7" ><path d="M1 1l4.6 4.6M5.6 1L1 5.6" stroke="#d9304a" stroke-width="1.3"/></svg><svg style="left:377.3px;top:160.4px" width="12" height="18.4" viewBox="0 0 12 18.4" ><path d="M1 1v14.4l3.3-3.1 2.3 4.9 1.9-.9-2.2-4.7 4.5-.5z" fill="#fff" stroke="#1a1a1a" stroke-width="1" stroke-linejoin="miter"/></svg><div style="left:285px;top:234px;width:834.4px;height:487.8px;background:#f0f0f0;border:2px solid #8992ac;box-shadow:inset 1px 1px 0 rgba(255,255,255,.85),0 1px 6px rgba(40,50,80,.42);"></div><svg style="left:293.5px;top:241px" width="16.088" height="16.2" viewBox="0 0 16.088 16.2"><defs><linearGradient id="xg293" x1="0" y1="0" x2="1" y2="0" gradientTransform="skewX(-14)"><stop offset="0" stop-color="#e8506a"/><stop offset=".3" stop-color="#ee6f86"/><stop offset=".47" stop-color="#b82a44"/><stop offset=".58" stop-color="#0c0c0c"/><stop offset="1" stop-color="#0c0c0c"/></linearGradient></defs><text x="1.3" y="13.8" font-family="Liberation Sans,Arial,sans-serif" font-weight="700" font-style="italic" font-size="17.952" fill="url(#xg293)" stroke="url(#xg293)" stroke-width="0.9" stroke-linejoin="round" textLength="11.088" lengthAdjust="spacingAndGlyphs">X</text></svg><span class="t" style="left:310.40px;top:242px;color:#2e2e2e;letter-spacing:-0.221px;">Open</span><svg style="left:1093px;top:243.4px" width="11" height="11" viewBox="0 0 11 11" ><path d="M1.2 1.2l8.4 8.4M9.6 1.2L1.2 9.6" stroke="#222" stroke-width="1.2"/></svg><svg style="left:299.8px;top:273.8px" width="15" height="13" viewBox="0 0 15 13" ><path d="M13.4 6.4H2.2M7 1.4L2 6.4l5 5" fill="none" stroke="#444" stroke-width="1.3"/></svg><svg style="left:318.6px;top:273.8px" width="15" height="13" viewBox="0 0 15 13" ><path d="M1.4 6.4h11.2M7.8 1.4l5 5-5 5" fill="none" stroke="#b4b4b4" stroke-width="1.3"/></svg><svg style="left:343.6px;top:279px" width="6" height="4" viewBox="0 0 6 4" ><path d="M0.6 0.6h4.4L2.8 3.2z" fill="#555"/></svg><svg style="left:360px;top:273.4px" width="13" height="14" viewBox="0 0 13 14" ><path d="M6.4 12.8V1.8M1.4 6.8l5-5 5 5" fill="none" stroke="#444" stroke-width="1.3"/></svg><div style="left:381.6px;top:271px;width:513px;height:19.6px;background:#fff;border:1px solid #b9b9b9;"></div><svg style="left:384px;top:275px" width="14" height="11.6" viewBox="0 0 14.2 12" ><path d="M0.6 1.6Q0.6 0.6 1.6 0.6h3.6l1.6 1.5h5.9q1 0 1 1V10.4q0 1-1 1H1.6q-1 0-1-1z" fill="#eeb93c"/><path d="M0.6 3.6h12.1q1 0 1 1v5.8q0 1-1 1H1.6q-1 0-1-1z" fill="#fbd465"/></svg><svg style="left:405px;top:277.6px" width="4" height="6" viewBox="0 0 4 6" ><path d="M0.6 0.4L3.2 2.9 0.6 5.4z" fill="#555"/></svg><span class="t" style="left:420.00px;top:275px;color:#333;letter-spacing:-0.450px;">This PC</span><svg style="left:459.4px;top:277.6px" width="4" height="6" viewBox="0 0 4 6" ><path d="M0.6 0.4L3.2 2.9 0.6 5.4z" fill="#555"/></svg><span class="t" style="left:473.60px;top:275px;color:#333;letter-spacing:-0.122px;">pCloud Drive (P:)</span><svg style="left:552.8px;top:277.6px" width="4" height="6" viewBox="0 0 4 6" ><path d="M0.6 0.4L3.2 2.9 0.6 5.4z" fill="#555"/></svg><span class="t" style="left:567.00px;top:275px;color:#333;letter-spacing:-0.150px;">Projects</span><svg style="left:610px;top:277.6px" width="4" height="6" viewBox="0 0 4 6" ><path d="M0.6 0.4L3.2 2.9 0.6 5.4z" fill="#555"/></svg><span class="t" style="left:624.40px;top:275px;color:#333;letter-spacing:-0.243px;">Cadglobal</span><svg style="left:674.4px;top:277.6px" width="4" height="6" viewBox="0 0 4 6" ><path d="M0.6 0.4L3.2 2.9 0.6 5.4z" fill="#555"/></svg><span class="t" style="left:688.40px;top:275px;color:#333;letter-spacing:-0.450px;">PKMOSC</span><svg style="left:733.4px;top:277.6px" width="4" height="6" viewBox="0 0 4 6" ><path d="M0.6 0.4L3.2 2.9 0.6 5.4z" fill="#555"/></svg><svg style="left:885px;top:279.4px" width="7" height="5" viewBox="0 0 7 5" ><path d="M0.6 0.8h5.4L3.3 3.8z" fill="#555"/></svg><div style="left:900px;top:271px;width:207.5px;height:19.6px;background:#fff;border:1px solid #b9b9b9;"></div><span class="t" style="left:902.80px;top:275px;color:#8e8e8e;letter-spacing:0.151px;">Enter text to search...</span><svg style="left:1096.5px;top:276px" width="10" height="10" viewBox="0 0 10 10" ><circle cx="5.8" cy="3.8" r="2.7" fill="none" stroke="#7a7a7a" stroke-width="1"/><path d="M3.8 5.8L1 8.8" stroke="#7a7a7a" stroke-width="1.2"/></svg><svg style="left:303px;top:305.4px" width="13" height="12" viewBox="0 0 13 12" ><path d="M0.8 1.8Q0.8 1 1.6 1h3l1.4 1.4h4.4q.8 0 .8.8V10.4H0.8z" fill="#d87f28"/><path d="M0.8 1.6Q.8.9 1.6.9h2.8l.9 1H.8z" fill="#4d5a66"/><path d="M0.8 10.6l1.6-6.2h10l-1.7 6.2z" fill="#f4a24a"/></svg><span class="t" style="left:318.60px;top:305px;color:#333;letter-spacing:-0.258px;">New Folder</span><svg style="left:1075.6px;top:305.6px" width="16" height="12" viewBox="0 0 16 12" ><g fill="none" stroke="#6a6d75" stroke-width="1"><rect x="0.8" y="0.8" width="2.6" height="10.2"/><path d="M0.8 4.2h2.6M0.8 7.6h2.6"/><path d="M5.2 1.6h3.4M10 1.6h3.6M5.2 5h3.4M10 5h3.6M5.2 8.4h3.4M10 8.4h3.6" stroke-dasharray="3.4 1.4"/></g></svg><svg style="left:1098px;top:309.2px" width="7" height="5" viewBox="0 0 7 5" ><path d="M0.6 0.8h5.4L3.3 3.8z" fill="#555"/></svg><div style="left:287.5px;top:330.4px;width:829.5px;height:350.4px;background:#fff;border-top:1px solid #d4d4d4;border-bottom:1px solid #d4d4d4;"></div><div style="left:516px;top:331px;width:1px;height:349.5px;background:#d6d6d6;"></div><div style="left:287.5px;top:531.8px;width:228.5px;height:16px;background:#d2d2d2;"></div><svg width="0" height="0" style="left:0;top:0"><defs><radialGradient id="mg" cx=".35" cy=".3" r=".9"><stop offset="0" stop-color="#f29a7a"/><stop offset="1" stop-color="#d9566a"/></radialGradient></defs></svg><svg style="left:290.6px;top:337px" width="9" height="7" viewBox="0 0 9 7" ><path d="M1 1.6l3.4 3.4 3.4-3.4" fill="none" stroke="#333" stroke-width="1.2"/></svg><svg style="left:302.2px;top:333.8px" width="14.6" height="12.5" viewBox="0 0 14 12" ><path d="M1 1.4Q1 .6 1.8.6h10.4q.8 0 .8.8v8.2q0 .8-.8.8H1.8q-.8 0-.8-.8z" fill="#2aa4dc"/><path d="M1 8.4h12v1.2q0 .8-.8.8H1.8q-.8 0-.8-.8z" fill="#1678b8"/></svg><span class="t" style="left:319.60px;top:334px;color:#333;letter-spacing:-0.160px;">Desktop</span><svg style="left:306.9px;top:352.467px" width="7" height="9" viewBox="0 0 7 9" ><path d="M1.4 1l3.4 3.4L1.4 7.8" fill="none" stroke="#333" stroke-width="1.2"/></svg><svg style="left:316.8px;top:350.167px" width="15" height="13.3" viewBox="0 0 14 12.4" ><path d="M7 .8v7.2M3.4 5L7 8.4 10.6 5" fill="none" stroke="#1aa676" stroke-width="1.5"/><path d="M2 11h10" stroke="#1aa676" stroke-width="1.5"/></svg><span class="t" style="left:334.70px;top:351px;color:#333;letter-spacing:-0.273px;">Downloads</span><svg style="left:306.9px;top:369.134px" width="7" height="9" viewBox="0 0 7 9" ><path d="M1.4 1l3.4 3.4L1.4 7.8" fill="none" stroke="#333" stroke-width="1.2"/></svg><svg style="left:316.8px;top:366.834px" width="15" height="13.3" viewBox="0 0 14 12.4" ><path d="M3 6v5.4h8V6L7 2.6z" fill="#a4a8ae"/><rect x="5.8" y="7.6" width="2.4" height="3.8" fill="#fff"/><path d="M.8 6.8L7 1.2l6.2 5.6" fill="none" stroke="#e8803a" stroke-width="1.7" stroke-linejoin="round"/></svg><span class="t" style="left:334.70px;top:367px;color:#333;letter-spacing:-0.450px;">Home</span><svg style="left:316.8px;top:383.501px" width="15" height="13.3" viewBox="0 0 14 12.4" ><path d="M3 3h10v9.4H3z" fill="#1c66c0"/><rect x=".8" y=".6" width="10.6" height="10" rx="1" fill="#2a7ed8"/><path d="M.8 9.6l3.8-4 3 3 1.4-1.2 2.4 2.4v.8H.8z" fill="#fff"/><circle cx="8.6" cy="3.6" r="1" fill="#fff"/></svg><span class="t" style="left:334.70px;top:384px;color:#333;letter-spacing:-0.273px;">Gallery</span><svg style="left:306.9px;top:402.468px" width="7" height="9" viewBox="0 0 7 9" ><path d="M1.4 1l3.4 3.4L1.4 7.8" fill="none" stroke="#333" stroke-width="1.2"/></svg><svg style="left:316.8px;top:400.168px" width="15" height="13.3" viewBox="0 0 14 12.4" ><path d="M3.6 10.6a2.9 2.9 0 0 1-.4-5.7A4 4 0 0 1 10.6 4.6a3 3 0 0 1 .4 6z" fill="#1f7ae0"/><path d="M3.6 10.6a2.9 2.9 0 0 1-.6-5.6l8.6 5.2q-.3.4-.6.4z" fill="#0f5fc4"/></svg><span class="t" style="left:334.70px;top:401px;color:#333;letter-spacing:-0.151px;">Parneet - Personal</span><svg style="left:306.9px;top:419.135px" width="7" height="9" viewBox="0 0 7 9" ><path d="M1.4 1l3.4 3.4L1.4 7.8" fill="none" stroke="#333" stroke-width="1.2"/></svg><svg style="left:316.8px;top:416.835px" width="15" height="13.3" viewBox="0 0 14 12.4" ><path d="M.8 1.6Q.8.8 1.6.8h10.8q.8 0 .8.8v8q0 .8-.8.8H1.6q-.8 0-.8-.8z" fill="#2aa4dc"/><path d="M.8 8.6h12.4v1q0 .8-.8.8H1.6q-.8 0-.8-.8z" fill="#176fb2"/><rect x="2.2" y="2.6" width="1.4" height="1.2" fill="#fff"/><rect x="2.2" y="5" width="1.4" height="1.2" fill="#fff"/></svg><span class="t" style="left:334.70px;top:417px;color:#333;letter-spacing:-0.203px;">Desktop</span><svg style="left:306.9px;top:435.802px" width="7" height="9" viewBox="0 0 7 9" ><path d="M1.4 1l3.4 3.4L1.4 7.8" fill="none" stroke="#333" stroke-width="1.2"/></svg><svg style="left:316.8px;top:433.502px" width="15" height="13.3" viewBox="0 0 14 12.4" ><rect x="2.4" y=".6" width="9.2" height="11" rx=".8" fill="#a9b6cf"/><rect x="2.4" y="8.8" width="9.2" height="2.8" fill="#7f8fb0"/><rect x="3.8" y="2.2" width="2.8" height="2.4" fill="#eef1f7"/><path d="M7.6 2.6h2.6M7.6 4.2h2.6M3.8 6h6.4M3.8 7.4h6.4" stroke="#eef1f7" stroke-width=".8"/></svg><span class="t" style="left:334.70px;top:434px;color:#333;letter-spacing:-0.263px;">Documents</span><svg style="left:306.9px;top:452.469px" width="7" height="9" viewBox="0 0 7 9" ><path d="M1.4 1l3.4 3.4L1.4 7.8" fill="none" stroke="#333" stroke-width="1.2"/></svg><svg style="left:316.8px;top:450.169px" width="15" height="13.3" viewBox="0 0 14 12.4" ><path d="M7 .8v7.2M3.4 5L7 8.4 10.6 5" fill="none" stroke="#1aa676" stroke-width="1.5"/><path d="M2 11h10" stroke="#1aa676" stroke-width="1.5"/></svg><span class="t" style="left:334.70px;top:451px;color:#333;letter-spacing:-0.273px;">Downloads</span><svg style="left:306.9px;top:469.136px" width="7" height="9" viewBox="0 0 7 9" ><path d="M1.4 1l3.4 3.4L1.4 7.8" fill="none" stroke="#333" stroke-width="1.2"/></svg><svg style="left:316.8px;top:466.836px" width="15" height="13.3" viewBox="0 0 14 12.4" ><circle cx="7" cy="6.2" r="6" fill="#e27565"/><circle cx="7" cy="6.2" r="6" fill="url(#mg)"/><path d="M8.4 2.6v5.2a1.7 1.5 0 1 1-1-1.3V2.6l2.6.8v1.2z" fill="#fff"/></svg><span class="t" style="left:334.70px;top:467px;color:#333;letter-spacing:-0.450px;">Music</span><svg style="left:306.9px;top:485.803px" width="7" height="9" viewBox="0 0 7 9" ><path d="M1.4 1l3.4 3.4L1.4 7.8" fill="none" stroke="#333" stroke-width="1.2"/></svg><svg style="left:316.8px;top:483.503px" width="15" height="13.3" viewBox="0 0 14 12.4" ><rect x="1" y=".6" width="11.6" height="11" rx="1" fill="#2f86e4"/><path d="M1 10l3.8-4.4 3 3.2 1.6-1.4 3.2 3v.2q0 1-1 1H2q-1 0-1-1z" fill="#fff"/><circle cx="9.2" cy="3.6" r="1.1" fill="#fff"/></svg><span class="t" style="left:334.70px;top:484px;color:#333;letter-spacing:-0.238px;">Pictures</span><svg style="left:306.9px;top:502.47px" width="7" height="9" viewBox="0 0 7 9" ><path d="M1.4 1l3.4 3.4L1.4 7.8" fill="none" stroke="#333" stroke-width="1.2"/></svg><svg style="left:316.8px;top:500.17px" width="15" height="13.3" viewBox="0 0 14 12.4" ><rect x="1" y=".6" width="11.8" height="11" rx="1" fill="#8a3ad6"/><path d="M1 .6h2v11H1zM10.8.6h2v11h-2z" fill="#6a22b4"/><path d="M1.5 2h1M1.5 4.4h1M1.5 6.8h1M1.5 9.2h1M11.3 2h1M11.3 4.4h1M11.3 6.8h1M11.3 9.2h1" stroke="#e7d4fa" stroke-width="1"/><path d="M5.4 3.6l4 2.5-4 2.5z" fill="#f2e6ff"/></svg><span class="t" style="left:334.70px;top:501px;color:#333;letter-spacing:-0.406px;">Videos</span><svg style="left:306.9px;top:519.137px" width="7" height="9" viewBox="0 0 7 9" ><path d="M1.4 1l3.4 3.4L1.4 7.8" fill="none" stroke="#333" stroke-width="1.2"/></svg><svg style="left:316.8px;top:516.837px" width="15" height="13.3" viewBox="0 0 14 12.4" ><path d="M.6 1.8Q.6.8 1.6.8h3.4l1.5 1.4h5.9q1 0 1 1V10.6q0 1-1 1H1.6q-1 0-1-1z" fill="#eeb93c"/><path d="M.6 3.8h11.8q1 0 1 1v5.8q0 1-1 1H1.6q-1 0-1-1z" fill="#fbd465"/></svg><span class="t" style="left:334.70px;top:517px;color:#333;letter-spacing:-0.089px;">x4d30</span><svg style="left:306.9px;top:535.804px" width="7" height="9" viewBox="0 0 7 9" ><path d="M1.4 1l3.4 3.4L1.4 7.8" fill="none" stroke="#333" stroke-width="1.2"/></svg><svg style="left:316.8px;top:533.504px" width="15" height="13.3" viewBox="0 0 14 12.4" ><rect x=".8" y=".6" width="12.4" height="9" rx=".8" fill="#27a6dc"/><path d="M.8 7.6h12.4v1.2q0 .8-.8.8H1.6q-.8 0-.8-.8z" fill="#1b86c6"/><path d="M6.2 9.6h1.6v1.6h-1.6zM4.4 11.2h5.2v.7H4.4z" fill="#9aa6b4"/></svg><span class="t" style="left:334.70px;top:534px;color:#333;letter-spacing:-0.450px;">This PC</span><svg style="left:306.9px;top:552.471px" width="7" height="9" viewBox="0 0 7 9" ><path d="M1.4 1l3.4 3.4L1.4 7.8" fill="none" stroke="#333" stroke-width="1.2"/></svg><svg style="left:316.8px;top:550.171px" width="15" height="13.3" viewBox="0 0 14 12.4" ><path d="M.6 1.6Q.6.6 1.6.6h3.4l1.5 1.4h5.9q1 0 1 1V9.4q0 1-1 1H1.6q-1 0-1-1z" fill="#eeb93c"/><path d="M.6 3.4h11.8q1 0 1 1v5q0 1-1 1H1.6q-1 0-1-1z" fill="#fbd465"/><rect x=".6" y="10.8" width="12.8" height="1.2" fill="#2a8edc"/></svg><span class="t" style="left:334.70px;top:551px;color:#333;letter-spacing:-0.237px;">Libraries</span><svg style="left:306.9px;top:569.138px" width="7" height="9" viewBox="0 0 7 9" ><path d="M1.4 1l3.4 3.4L1.4 7.8" fill="none" stroke="#333" stroke-width="1.2"/></svg><svg style="left:316.8px;top:566.838px" width="15" height="13.3" viewBox="0 0 14 12.4" ><circle cx="8.6" cy="3.6" r="3.2" fill="#c8d4e4"/><circle cx="8.6" cy="3.6" r="1" fill="#fff"/><rect x="1.4" y="5.4" width="11.2" height="3" fill="#1c1c1c"/><rect x="3.4" y="8.4" width="7.2" height="3.2" fill="#111"/><rect x="4.8" y="9.6" width="4.4" height=".9" fill="#eee"/></svg><span class="t" style="left:334.70px;top:567px;color:#333;letter-spacing:-0.290px;">DVD RW Drive (F:)</span><svg style="left:306.9px;top:585.805px" width="7" height="9" viewBox="0 0 7 9" ><path d="M1.4 1l3.4 3.4L1.4 7.8" fill="none" stroke="#333" stroke-width="1.2"/></svg><svg style="left:316.8px;top:583.505px" width="15" height="13.3" viewBox="0 0 14 12.4" ><rect x="1" y="5.2" width="12" height="2.6" rx=".5" fill="#2f2f2f"/><rect x="1" y="7.2" width="12" height=".8" fill="#7a7a7a"/><rect x="10.6" y="5.9" width="1.4" height=".8" fill="#8ad08a"/></svg><span class="t" style="left:334.70px;top:584px;color:#333;letter-spacing:-0.128px;">pCloud Drive (P:)</span><svg style="left:306.9px;top:602.472px" width="7" height="9" viewBox="0 0 7 9" ><path d="M1.4 1l3.4 3.4L1.4 7.8" fill="none" stroke="#333" stroke-width="1.2"/></svg><svg style="left:316.8px;top:600.172px" width="15" height="13.3" viewBox="0 0 14 12.4" ><rect x="1.4" y="2.6" width="11.8" height="7.4" rx=".8" fill="#27a6dc"/><path d="M6.6 10h1.6v1.2H6.6zM4.6 11.2h5.6v.7H4.6z" fill="#8e9aa8"/><circle cx="3.6" cy="3.4" r="3" fill="#5cc0ee" stroke="#1b7fc0" stroke-width=".6"/><path d="M.8 3.4h5.6M3.6.6v5.6" stroke="#1b7fc0" stroke-width=".5"/></svg><span class="t" style="left:334.70px;top:601px;color:#333;letter-spacing:-0.086px;">Network</span><div style="left:517px;top:331px;width:600px;height:19.5px;background:#f0f0f0;border-bottom:1px solid #c4c4c4;"></div><div style="left:536.2px;top:332px;width:1px;height:17.5px;background:#c9c9c9;"></div><div style="left:681.2px;top:332px;width:1px;height:17.5px;background:#c9c9c9;"></div><div style="left:826.4px;top:332px;width:1px;height:17.5px;background:#c9c9c9;"></div><div style="left:971.4px;top:332px;width:1px;height:17.5px;background:#c9c9c9;"></div><span class="t" style="left:539.80px;top:335px;color:#808080;letter-spacing:-0.450px;">Name</span><span class="t" style="left:684.80px;top:335px;color:#808080;letter-spacing:-0.145px;">Date modified</span><span class="t" style="left:830.00px;top:335px;color:#808080;letter-spacing:-0.130px;">Type</span><span class="t" style="left:974.80px;top:335px;color:#808080;letter-spacing:-0.450px;">Size</span><svg style="left:668px;top:338.2px" width="8" height="5" viewBox="0 0 8 5" ><path d="M0.6 4.2L3.8.8 7 4.2z" fill="#666"/></svg><svg style="left:519.8px;top:352.6px" width="13.4" height="11.4" viewBox="0 0 14.2 12" ><path d="M0.6 1.6Q0.6 0.6 1.6 0.6h3.6l1.6 1.5h5.9q1 0 1 1V10.4q0 1-1 1H1.6q-1 0-1-1z" fill="#eeb93c"/><path d="M0.6 3.6h12.1q1 0 1 1v5.8q0 1-1 1H1.6q-1 0-1-1z" fill="#fbd465"/></svg><span class="t" style="left:539.80px;top:353px;color:#333;letter-spacing:-0.297px;">Documents</span><span class="t" style="left:684.80px;top:353px;color:#333;letter-spacing:-0.120px;">2025-01-05 8:17 PM</span><span class="t" style="left:830.00px;top:353px;color:#333;letter-spacing:-0.159px;">File folder</span><div style="left:517.2px;top:367.4px;width:599.6px;height:16.2px;background:#cfdcf2;border:1px dotted #7f89a4;"></div><svg style="left:519.6px;top:369px" width="14" height="13" viewBox="0 0 14 13" ><path d="M4.6.8h5.6l3 3v8.4H4.6z" fill="#fff" stroke="#8a8e96" stroke-width=".9"/><path d="M10.2.8v3h3" fill="none" stroke="#8a8e96" stroke-width=".8"/><path d="M9.4 5h2.4M9.4 7h2.4M9.4 9h2.4" stroke="#2a9d6c" stroke-width=".9"/><rect x=".6" y="3.2" width="7.6" height="7.4" fill="#1a7a46"/><text x="4.4" y="9.4" text-anchor="middle" font-family="Liberation Sans,Arial,sans-serif" font-weight="700" font-size="6.6" fill="#fff">X</text></svg><span class="t" style="left:539.80px;top:370px;color:#2a2a2a;letter-spacing:-0.224px;">TagPatterns_PKMOSC.xlsx</span><span class="t" style="left:684.80px;top:370px;color:#2a2a2a;letter-spacing:-0.041px;">2025-01-07 12:43 AM</span><span class="t" style="left:830.00px;top:370px;color:#2a2a2a;letter-spacing:-0.120px;">Microsoft Excel Worksheet</span><span class="t" style="left:1095.28px;top:370px;color:#2a2a2a;letter-spacing:-0.100px;">9 KB</span><span class="t" style="left:296.00px;top:696px;color:#333;letter-spacing:-0.282px;">File Name:</span><div style="left:343px;top:692px;width:341px;height:19.2px;background:#fff;border:1px solid #c3c3c3;"></div><span class="t" style="left:346.60px;top:696px;color:#2a2a2a;letter-spacing:-0.232px;">TagPatterns_PKMOSC.xlsx</span><svg style="left:674.2px;top:699.8px" width="7" height="5" viewBox="0 0 7 5" ><path d="M0.6 0.8h5.4L3.3 3.8z" fill="#555"/></svg><div style="left:689px;top:692px;width:186.5px;height:19.2px;background:#fff;border:1px solid #c3c3c3;"></div><span class="t" style="left:692.00px;top:696px;color:#2a2a2a;letter-spacing:-0.003px;">Excel File (*.xlsx)</span><svg style="left:865.8px;top:699.8px" width="7" height="5" viewBox="0 0 7 5" ><path d="M0.6 0.8h5.4L3.3 3.8z" fill="#555"/></svg><div style="left:959px;top:692px;width:71.6px;height:19.2px;background:#fdfdfd;border:1px solid #3f5b8e;box-shadow:inset 0 0 0 .55px #3f5b8e;"></div><span class="t" style="left:983.90px;top:696px;color:#222;letter-spacing:-0.271px;">Open</span><div style="left:1036.5px;top:692px;width:71.2px;height:19.2px;background:#fbfbfb;border:1px solid #cdcdcd;"></div><span class="t" style="left:1058.25px;top:696px;color:#222;letter-spacing:-0.450px;">Cancel</span><div class="hl" style="left:672.5px;top:83px;width:71.6px;height:50.2px;"></div><div class="hl" style="left:5px;top:388.4px;width:143.6px;height:44.6px;"></div><div class="hl" style="left:480.4px;top:358.4px;width:500px;height:37.7px;"></div><div class="hl" style="left:950.4px;top:666.6px;width:85.8px;height:56px;"></div>
</div></body></html>
